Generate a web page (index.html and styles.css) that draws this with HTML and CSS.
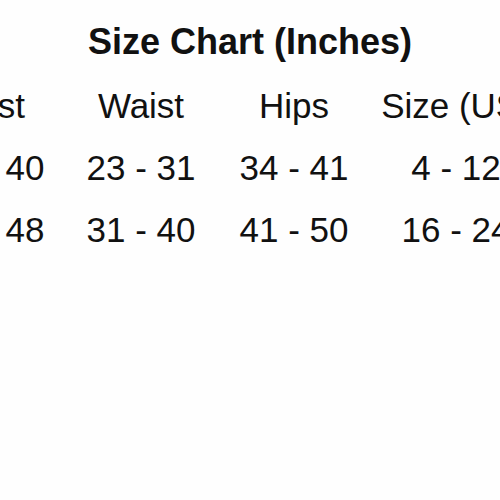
FILE: index.html
```html
<!DOCTYPE html>
<html>
<head>
<meta charset="utf-8">
<link rel="stylesheet" href="styles.css">
</head>
<body>
<div class="page">
  <h1 class="title">Size Chart (Inches)</h1>
  <div class="chart">
    <div class="cell">Bust</div>
    <div class="cell">Waist</div>
    <div class="cell">Hips</div>
    <div class="cell">Size (US)</div>
    <div class="cell">32 - 40</div>
    <div class="cell">23 - 31</div>
    <div class="cell">34 - 41</div>
    <div class="cell">4 - 12</div>
    <div class="cell">40 - 48</div>
    <div class="cell">31 - 40</div>
    <div class="cell">41 - 50</div>
    <div class="cell">16 - 24</div>
  </div>
</div>
</body>
</html>
```
FILE: styles.css
```css
html, body {
  margin: 0;
  padding: 0;
  background: #fefefe;
  width: 500px;
  height: 500px;
  overflow: hidden;
}
.page {
  font-family: "Liberation Sans", Arial, sans-serif;
  color: #111;
  padding-top: 22px;
}
.title {
  margin: 0;
  font-size: 36px;
  font-weight: bold;
  line-height: 40px;
  text-align: center;
  width: 500px;
}
.chart {
  display: grid;
  grid-template-columns: 150px 152px 154px 170px;
  row-gap: 22px;
  margin-top: 24px;
  margin-left: -85px;
  font-size: 35px;
  line-height: 40px;
}
.cell {
  text-align: center;
  white-space: nowrap;
}
```
